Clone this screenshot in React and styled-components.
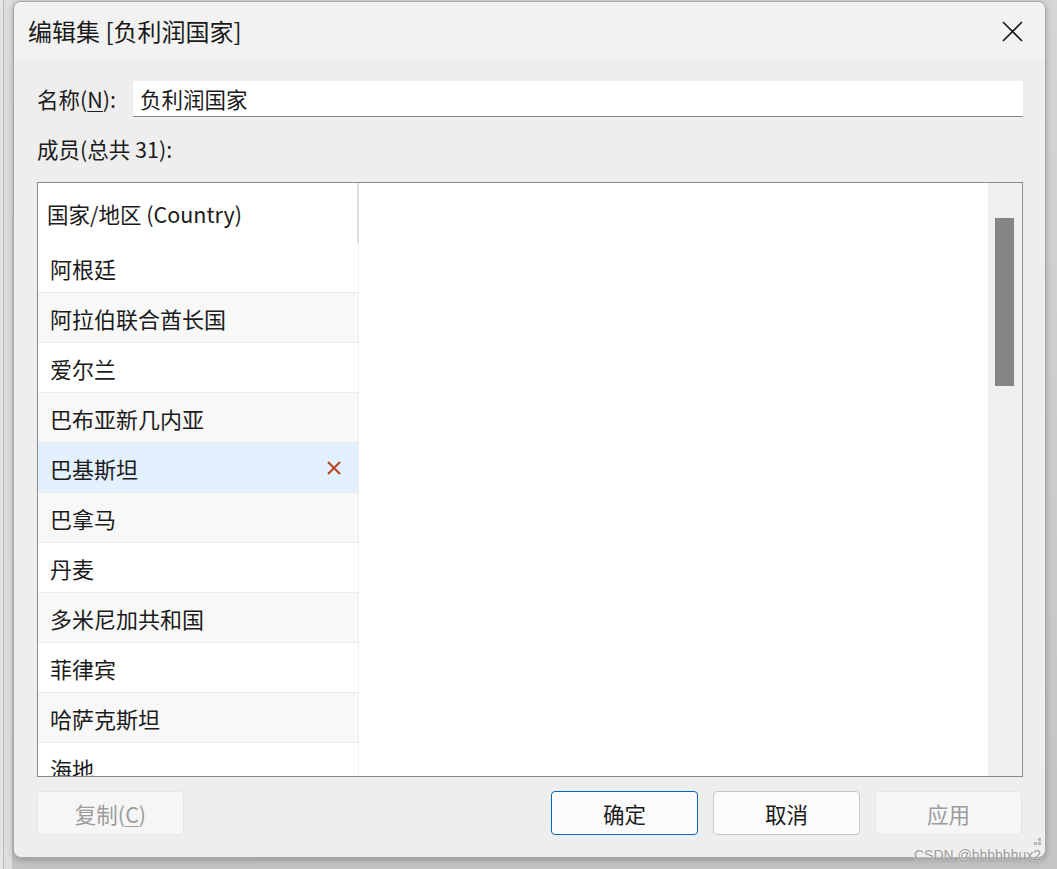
import React from "react";
import styled, { createGlobalStyle } from "styled-components";

const Global = createGlobalStyle`
  html, body { margin: 0; padding: 0; }
  body {
    width: 1057px; height: 869px; overflow: hidden;
    font-family: "Noto Sans CJK SC", "Noto Sans", sans-serif;
    color: #1b1b1b;
  }
`;

const Page = styled.div`
  position: relative;
  width: 1057px;
  height: 869px;
  box-sizing: border-box;
  padding: 1px 10px 0 13px;
  background:
    linear-gradient(to right, #e4e4e4 0 3px, #b9b9b9 3px 4px, #dedede 4px 12px, transparent 12px),
    linear-gradient(to bottom, #d6d6d6, #c4c4c4);
`;

const Dialog = styled.div`
  width: 1033px;
  height: 857px;
  box-sizing: border-box;
  border: 1px solid #a9a9a9;
  border-radius: 8px;
  background: #eeeeee;
  box-shadow: 0 2px 6px rgba(0, 0, 0, 0.25);
  display: flex;
  flex-direction: column;
  overflow: hidden;
`;

const TitleBar = styled.div`
  height: 57px;
  flex: none;
  background: #f2f2f2;
  display: flex;
  align-items: center;
  justify-content: space-between;
  padding: 0 22px 0 14px;
`;

const Title = styled.div`
  font-size: 24px;
  line-height: 1;
  margin-top: 1px;
  color: #1a1a1a;
`;

const CloseButton = styled.button`
  border: none;
  background: transparent;
  padding: 0;
  width: 22px;
  height: 22px;
  display: flex;
  align-items: center;
  justify-content: center;
  margin-top: 2px;
`;

const Body = styled.div`
  flex: 1;
  display: flex;
  flex-direction: column;
  padding: 22px 22px 0 23px;
`;

const NameRow = styled.div`
  display: flex;
  align-items: center;
  height: 36px;
`;

const Label = styled.div`
  font-size: 21.5px;
  line-height: 30px;
  color: #1b1b1b;
  width: ${(p) => p.$width || "auto"};
  flex: none;
`;

const U = styled.span`
  text-decoration: underline;
  text-underline-offset: 3px;
  text-decoration-thickness: 1px;
`;

const NameInput = styled.div`
  flex: 1;
  height: 36px;
  box-sizing: border-box;
  background: #ffffff;
  border-bottom: 1px solid #8a8a8a;
  display: flex;
  align-items: center;
  padding-left: 7px;
  font-size: 21.5px;
`;

const MembersLabel = styled(Label)`
  margin-top: 17px;
`;

const ListBox = styled.div`
  margin-top: 18px;
  height: 595px;
  flex: none;
  box-sizing: border-box;
  border: 1px solid #8b8b8b;
  background: #ffffff;
  display: flex;
  overflow: hidden;
`;

const Column = styled.div`
  width: 320px;
  flex: none;
  display: flex;
  flex-direction: column;
  border-right: 1px solid #efefef;
`;

const Header = styled.div`
  height: 60px;
  flex: none;
  display: flex;
  align-items: center;
  padding-left: 9px;
  font-size: 21.5px;
  color: #1b1b1b;
  margin-right: -1px;
  border-right: 2px solid #dedede;
`;

const Row = styled.div`
  height: 49px;
  flex: none;
  display: flex;
  align-items: center;
  justify-content: space-between;
  padding: 0 16px 0 12px;
  font-size: 22px;
  border-bottom: 1px solid #ebebeb;
  background: ${(p) => (p.$selected ? "#e3f0fd" : p.$alt ? "#f8f8f8" : "#ffffff")};
`;

const Pane = styled.div`
  flex: 1;
  background: #ffffff;
`;

const ScrollTrack = styled.div`
  width: 34px;
  flex: none;
  background: #efefef;
  padding: 35px 0 0 7px;
  box-sizing: border-box;
`;

const Thumb = styled.div`
  width: 19px;
  height: 168px;
  background: #858585;
`;

const Footer = styled.div`
  margin-top: 14px;
  display: flex;
  align-items: center;
  gap: 15px;
  padding-right: 1px;
`;

const Button = styled.button`
  width: 147px;
  height: 44px;
  box-sizing: border-box;
  border-radius: 4px;
  font-family: inherit;
  font-size: 21.5px;
  padding: 0;
  border: 1px solid ${(p) => (p.$primary ? "#0067c0" : p.$disabled ? "#e6e6e6" : "#c9c9c9")};
  background: ${(p) => (p.$disabled ? "#f6f6f6" : "#fbfbfb")};
  color: ${(p) => (p.$disabled ? "#9c9c9c" : "#1b1b1b")};
`;

const Spacer = styled.div`
  flex: 1;
`;

const Watermark = styled.div`
  position: absolute;
  right: 16px;
  bottom: 6px;
  font-family: "Liberation Sans", sans-serif;
  font-size: 14px;
  color: #9a9a9a;
  text-shadow: 0 0 2px #ffffff;
`;

const Grip = styled.svg`
  position: absolute;
  right: 16px;
  bottom: 21px;
`;

const countries = [
  "阿根廷",
  "阿拉伯联合酋长国",
  "爱尔兰",
  "巴布亚新几内亚",
  "巴基斯坦",
  "巴拿马",
  "丹麦",
  "多米尼加共和国",
  "菲律宾",
  "哈萨克斯坦",
  "海地",
];

export default function App() {
  return (
    <>
      <Global />
      <Page>
        <Dialog>
          <TitleBar>
            <Title>编辑集 [负利润国家]</Title>
            <CloseButton aria-label="关闭">
              <svg width="21" height="21" viewBox="0 0 21 21">
                <path d="M1 1 L20 20 M20 1 L1 20" stroke="#1a1a1a" strokeWidth="1.6" fill="none" />
              </svg>
            </CloseButton>
          </TitleBar>
          <Body>
            <NameRow>
              <Label $width="96px">
                名称(<U>N</U>):
              </Label>
              <NameInput>负利润国家</NameInput>
            </NameRow>
            <MembersLabel>成员(总共 31):</MembersLabel>
            <ListBox>
              <Column>
                <Header>国家/地区 (Country)</Header>
                {countries.map((c, i) => (
                  <Row key={c} $alt={i % 2 === 1} $selected={i === 4}>
                    <span>{c}</span>
                    {i === 4 && (
                      <svg width="16" height="16" viewBox="0 0 16 16">
                        <path d="M2 2 L14 14 M14 2 L2 14" stroke="#b8482c" strokeWidth="2.2" fill="none" />
                      </svg>
                    )}
                  </Row>
                ))}
              </Column>
              <Pane />
              <ScrollTrack>
                <Thumb />
              </ScrollTrack>
            </ListBox>
            <Footer>
              <Button $disabled>
                复制(<U>C</U>)
              </Button>
              <Spacer />
              <Button $primary>确定</Button>
              <Button>取消</Button>
              <Button $disabled>应用</Button>
            </Footer>
          </Body>
        </Dialog>
        <Grip width="10" height="10" viewBox="0 0 10 10">
          <rect x="7" y="0" width="3" height="3" fill="#b5b5b5" />
          <rect x="3" y="4" width="3" height="3" fill="#b5b5b5" />
          <rect x="7" y="4" width="3" height="3" fill="#b5b5b5" />
        </Grip>
        <Watermark>CSDN @hhhhhhux2</Watermark>
      </Page>
    </>
  );
}
